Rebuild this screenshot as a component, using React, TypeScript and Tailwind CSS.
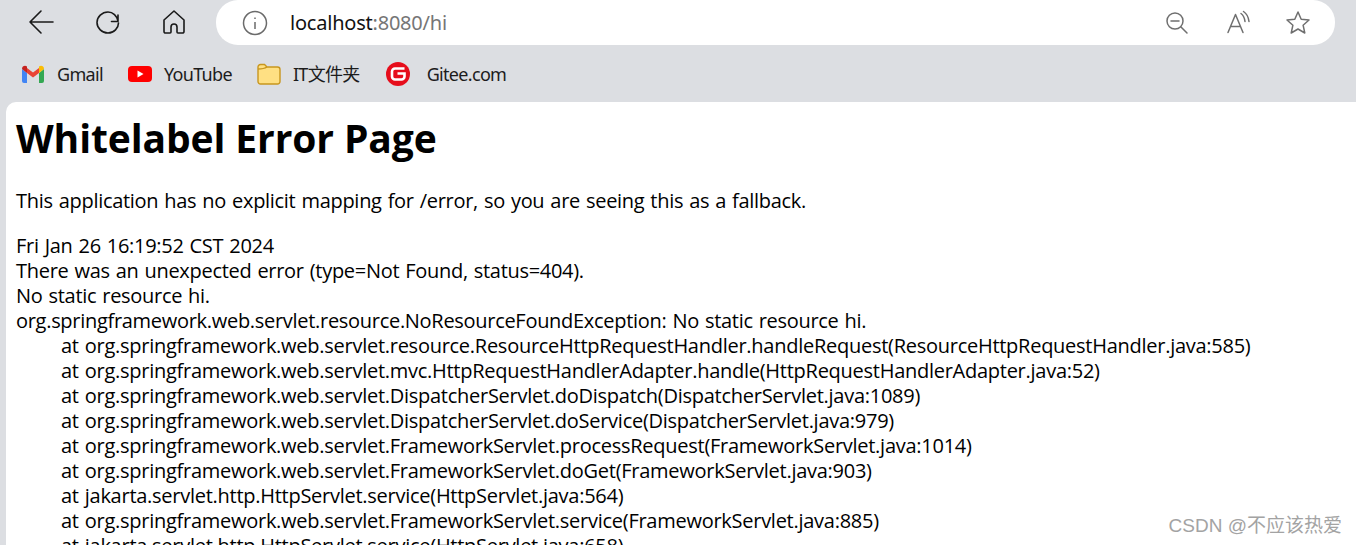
import { ReactNode } from 'react';

const UI_FONT = "font-['Noto_Sans','Noto_Sans_CJK_SC',sans-serif]";

const STACK_LINES = [
  'org.springframework.web.servlet.resource.ResourceHttpRequestHandler.handleRequest(ResourceHttpRequestHandler.java:585)',
  'org.springframework.web.servlet.mvc.HttpRequestHandlerAdapter.handle(HttpRequestHandlerAdapter.java:52)',
  'org.springframework.web.servlet.DispatcherServlet.doDispatch(DispatcherServlet.java:1089)',
  'org.springframework.web.servlet.DispatcherServlet.doService(DispatcherServlet.java:979)',
  'org.springframework.web.servlet.FrameworkServlet.processRequest(FrameworkServlet.java:1014)',
  'org.springframework.web.servlet.FrameworkServlet.doGet(FrameworkServlet.java:903)',
  'jakarta.servlet.http.HttpServlet.service(HttpServlet.java:564)',
  'org.springframework.web.servlet.FrameworkServlet.service(FrameworkServlet.java:885)',
  'jakarta.servlet.http.HttpServlet.service(HttpServlet.java:658)',
];

function ToolIcon({ children, className }: { children: ReactNode; className: string }) {
  return (
    <svg viewBox="0 0 28 28" fill="none" stroke="currentColor" strokeLinecap="round" strokeLinejoin="round" className={className}>
      {children}
    </svg>
  );
}

function Bookmark({ icon, label, className }: { icon: ReactNode; label: string; className: string }) {
  return (
    <div className={`flex items-center ${className}`}>
      {icon}
      <span className="text-[18px] leading-[24px] text-[#1c1c1c] tracking-[-0.68px] whitespace-nowrap">{label}</span>
    </div>
  );
}

export default function App() {
  return (
    <div className={`h-[545px] w-[1356px] overflow-hidden bg-[#dcdee2] relative ${UI_FONT}`}>
      {/* Toolbar */}
      <div className="flex items-start h-[47px]">
        <ToolIcon className="w-7 h-7 ml-[28px] mt-[8px] text-[#1a1a1a] stroke-[1.6]">
          <path d="M2 14h23M13 3 2 14l11 11" />
        </ToolIcon>
        <ToolIcon className="w-7 h-7 ml-[38px] mt-[8px] text-[#1a1a1a] stroke-[1.6]">
          <path d="M24 7v6.5h-6.5M24 13c-1-5-5-9-10-9C8 4 3 9 3 14.500S8 25 14 25s10.500-5 10.500-10" />
        </ToolIcon>
        <ToolIcon className="w-7 h-7 ml-[38px] mt-[8px] text-[#1a1a1a] stroke-[1.6]">
          <path d="M14 3 4 12v11.500a1.500 1.500 0 0 0 1.500 1.500H10a1 1 0 0 0 1-1v-5a3 3 0 0 1 6 0v5a1 1 0 0 0 1 1h4.500a1.500 1.500 0 0 0 1.500-1.500V12Z" />
        </ToolIcon>
        <div className="ml-[28px] w-[1119px] h-[45px] bg-white rounded-[22px] flex items-center">
          <svg viewBox="0 0 26 26" fill="none" stroke="#6b6b6b" strokeWidth="1.5" className="w-[26px] h-[26px] ml-[26px]">
            <circle cx="13" cy="13" r="11.500" />
            <path d="M13 12v7M13 7.500v1.500" />
          </svg>
          <div className="ml-[22px] text-[20px] tracking-[-0.22px] text-[#111]">
            localhost<span className="text-[#767676]">:8080/hi</span>
          </div>
          <div className="ml-auto flex items-center text-[#6f6f6f]">
            <ToolIcon className="w-7 h-7 stroke-[1.5]">
              <circle cx="12" cy="12" r="8" />
              <path d="M8 12h8M18 18l6 6" />
            </ToolIcon>
            <ToolIcon className="w-7 h-7 ml-[34px] stroke-[1.5]">
              <path d="M3 23.500 10.500 5.500 18 23.500M5.500 17.500h10M16 4.500c2 1.500 3.500 4 4 8M18.500 2.500c3 2 5 5.500 5.500 10" />
            </ToolIcon>
            <ToolIcon className="w-7 h-7 ml-[31px] mr-[23px] stroke-[1.5]">
              <path d="m14 3 3.200 7.200 7.800.8-5.900 5.200 1.700 7.800-6.800-4-6.800 4 1.700-7.800L3 11l7.800-.8Z" />
            </ToolIcon>
          </div>
        </div>
      </div>

      {/* Bookmarks */}
      <div className="flex items-center h-[55px] pb-[1px]">
        <Bookmark
          className="ml-[22px]"
          label="Gmail"
          icon={
            <svg viewBox="0 0 22 18" className="w-[22px] h-[18px] mr-[13px]">
              <path d="M0 4v12a2 2 0 0 0 2 2h3V8Z" fill="#4285f4" />
              <path d="M22 4v12a2 2 0 0 1-2 2h-3V8Z" fill="#34a853" />
              <path d="M5 8v-5l6 4.500L17 3v5l-6 4.500Z" fill="#ea4335" />
              <path d="M0 4c0-3 3-4 5-2.500V8L0 4Z" fill="#c5221f" />
              <path d="M22 4c0-3-3-4-5-2.500V8l5-4Z" fill="#fbbc04" />
            </svg>
          }
        />
        <Bookmark
          className="ml-[25px]"
          label="YouTube"
          icon={
            <svg viewBox="0 0 24 16" className="w-6 h-4 mr-[12px]">
              <rect width="24" height="16" rx="4" fill="#ff0000" />
              <path d="m9.500 4.500 6 3.500-6 3.500Z" fill="#fff" />
            </svg>
          }
        />
        <Bookmark
          className="ml-[25px]"
          label="IT文件夹"
          icon={
            <svg viewBox="0 0 24 22" className="w-6 h-[22px] mr-[12px]">
              <path d="M1 4a2.500 2.500 0 0 1 2.500-2.500h4L10 4h10.500A2.500 2.500 0 0 1 23 6.500v12a2.500 2.500 0 0 1-2.500 2.500h-17A2.500 2.500 0 0 1 1 18.500Z" fill="#ffe083" stroke="#c8961e" strokeWidth="1.400" />
              <path d="M1 6c3 0 6 0 9-2" fill="none" stroke="#c8961e" strokeWidth="1.400" />
            </svg>
          }
        />
        <Bookmark
          className="ml-[26px]"
          label="Gitee.com"
          icon={
            <svg viewBox="0 0 24 24" className="w-6 h-6 mr-[17px]">
              <circle cx="12" cy="12" r="12" fill="#e60d1b" />
              <path d="M18.500 6.500H9A3 3 0 0 0 6 9.500v5A3 3 0 0 0 9 17.500h6.500a3 3 0 0 0 3-3V11.500H11.500" fill="none" stroke="#fff" strokeWidth="2.600" />
            </svg>
          }
        />
      </div>

      {/* Page */}
      <div className="ml-[6px] h-[443px] bg-white rounded-tl-[10px] pl-[10px] pt-[11px] text-black overflow-hidden font-['Open_Sans','Noto_Sans',sans-serif]">
        <h1 className="text-[39px] leading-[50px] font-bold tracking-[-0.1px]">Whitelabel Error Page</h1>
        <p className="mt-[25px] text-[20px] leading-[25px] tracking-[-0.295px] [word-spacing:1.1px] whitespace-nowrap">
          This application has no explicit mapping for /error, so you are seeing this as a fallback.
        </p>
        <div className="mt-[20px] text-[20px] leading-[25px] tracking-[-0.295px] [word-spacing:1.1px] whitespace-nowrap">
          <div>Fri Jan 26 16:19:52 CST 2024</div>
          <div>There was an unexpected error (type=Not Found, status=404).</div>
          <div>No static resource hi.</div>
          <div>org.springframework.web.servlet.resource.NoResourceFoundException: No static resource hi.</div>
          {STACK_LINES.map((line) => (
            <div key={line} className="pl-[45px] tracking-[-0.265px]">at {line}</div>
          ))}
        </div>
      </div>

      <div className="absolute right-[14px] bottom-[7px] text-[19px] leading-[24px] text-[#a3a3a3] font-['Liberation_Sans','Noto_Sans_CJK_SC',sans-serif]">
        CSDN @不应该热爱
      </div>
    </div>
  );
}
